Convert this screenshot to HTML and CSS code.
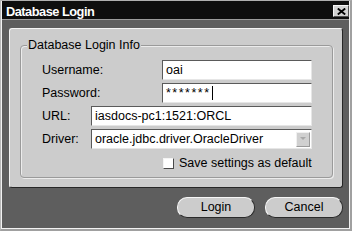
FILE: index.html
```html
<!DOCTYPE html>
<html>
<head>
<meta charset="utf-8">
<link rel="stylesheet" href="styles.css">
</head>
<body>
<div class="window">
  <div class="titlebar">
    <span class="title">Database Login</span>
    <span class="close"><svg width="9" height="7" viewBox="0 0 9 7"><path d="M0.8 0.5 L8.2 6.5 M8.2 0.5 L0.8 6.5" stroke="#000" stroke-width="1.9" fill="none"/></svg></span>
  </div>
  <div class="body">
    <div class="panel">
      <fieldset class="group">
        <legend class="legend">Database Login Info</legend>
        <div class="row first">
          <span class="lbl wide">Username:</span>
          <div class="field">oai</div>
        </div>
        <div class="row">
          <span class="lbl wide">Password:</span>
          <div class="field"><span class="stars">*******</span><span class="caret"></span></div>
        </div>
        <div class="row">
          <span class="lbl narrow">URL:</span>
          <div class="field">iasdocs-pc1:1521:ORCL</div>
        </div>
        <div class="row">
          <span class="lbl narrow">Driver:</span>
          <div class="field combo">
            <span class="combo-text">oracle.jdbc.driver.OracleDriver</span>
            <span class="arrow"><svg width="8" height="6" viewBox="0 0 8 6"><path d="M1 1 L7 1 L4 4 Z" fill="#a8a8a8"/></svg></span>
          </div>
        </div>
        <div class="row check">
          <span class="box"></span>
          <span class="check-label">Save settings as default</span>
        </div>
      </fieldset>
    </div>
    <div class="buttons">
      <button class="btn">Login</button>
      <button class="btn">Cancel</button>
    </div>
  </div>
</div>
</body>
</html>
```
FILE: styles.css
```css
html, body {
  margin: 0;
  padding: 0;
}
body {
  width: 352px;
  height: 231px;
  overflow: hidden;
  font-family: "Liberation Sans", Arial, sans-serif;
  font-size: 12.5px;
  color: #000;
}
.window {
  width: 352px;
  height: 231px;
  box-sizing: border-box;
  border-style: solid;
  border-color: #b0b0b0 #a0a0a0 #a0a0a0 #b8b8b8;
  border-width: 1px 2px 2px 1px;
  padding: 0 1px 1px 1px;
  background: #f2f2f2;
  display: flex;
  flex-direction: column;
}
.titlebar {
  height: 18px;
  flex: none;
  background: #0e0e0e;
  border-bottom: 1px solid #9c9c9c;
  display: flex;
  align-items: flex-start;
}
.title {
  color: #fff;
  font-weight: bold;
  font-size: 12.8px;
  letter-spacing: -0.5px;
  line-height: 15px;
  padding: 3px 0 0 4px;
}
.close {
  margin: 4px 0 0 auto;
  width: 16px;
  height: 12px;
  box-sizing: border-box;
  background: #d2d2d2;
  border: 1px solid;
  border-color: #f6f6f6 #505050 #505050 #f6f6f6;
  display: flex;
  align-items: center;
  justify-content: center;
}
.close svg {
  display: block;
}
.body {
  flex: 1;
  background: #5e5e5e;
  padding: 8px 6px 0 7px;
}
.panel {
  height: 160px;
  box-sizing: border-box;
  background: #cccccc;
  border: 1px solid;
  border-color: #f4f4f4 #262626 #262626 #f4f4f4;
  border-radius: 3px;
  padding-top: 9px;
}
.group {
  margin: 0 9px 0 10px;
  padding: 0 0 8px 6px;
  border: 1px solid #9a9a9a;
  border-radius: 4px;
  box-shadow: inset 1px 1px 0 #ececec, 1px 1px 0 #ececec;
  min-width: 0;
}
.legend {
  padding: 0 1px;
  line-height: 14px;
  background: #cccccc;
}
.row {
  display: flex;
  align-items: center;
  height: 20px;
  margin: 3px 20px 0 15px;
}
.row.first {
  margin-top: 8px;
}
.lbl {
  flex: none;
}
.lbl.wide {
  width: 120px;
}
.lbl.narrow {
  width: 49px;
}
.field {
  flex: 1;
  height: 20px;
  box-sizing: border-box;
  background: #fff;
  border: 1px solid;
  border-color: #5a5a5a #e6e6e6 #e6e6e6 #5a5a5a;
  padding-left: 3px;
  line-height: 18px;
  display: flex;
  align-items: center;
  white-space: nowrap;
  overflow: hidden;
}
.stars {
  letter-spacing: 1.5px;
}
.caret {
  width: 1px;
  height: 14px;
  background: #000;
  margin-left: 1px;
}
.combo {
  padding-right: 1px;
}
.combo-text {
  flex: 1;
}
.arrow {
  width: 14px;
  height: 15px;
  box-sizing: border-box;
  background: #d0d0d0;
  border: 1px solid;
  border-color: #f0f0f0 #9a9a9a #9a9a9a #f0f0f0;
  display: flex;
  align-items: center;
  justify-content: center;
}
.arrow svg {
  display: block;
}
.row.check {
  margin-top: 8px;
  height: 12px;
  padding-left: 121px;
}
.box {
  width: 11px;
  height: 11px;
  box-sizing: border-box;
  background: #fff;
  border: 1px solid;
  border-color: #f4f4f4 #4a4a4a #4a4a4a #f4f4f4;
  margin-right: 5px;
  flex: none;
}
.check-label {
  line-height: 12px;
  white-space: nowrap;
}
.buttons {
  display: flex;
  justify-content: flex-end;
  gap: 10px;
  margin-top: 9px;
}
.btn {
  width: 78px;
  height: 21px;
  box-sizing: border-box;
  background: #cccccc;
  border: 1px solid;
  border-color: #f6f6f6 #2a2a2a #2a2a2a #f6f6f6;
  border-radius: 10px;
  font-family: "Liberation Sans", Arial, sans-serif;
  font-size: 12.5px;
  color: #000;
  padding: 0;
  line-height: 19px;
}
```
